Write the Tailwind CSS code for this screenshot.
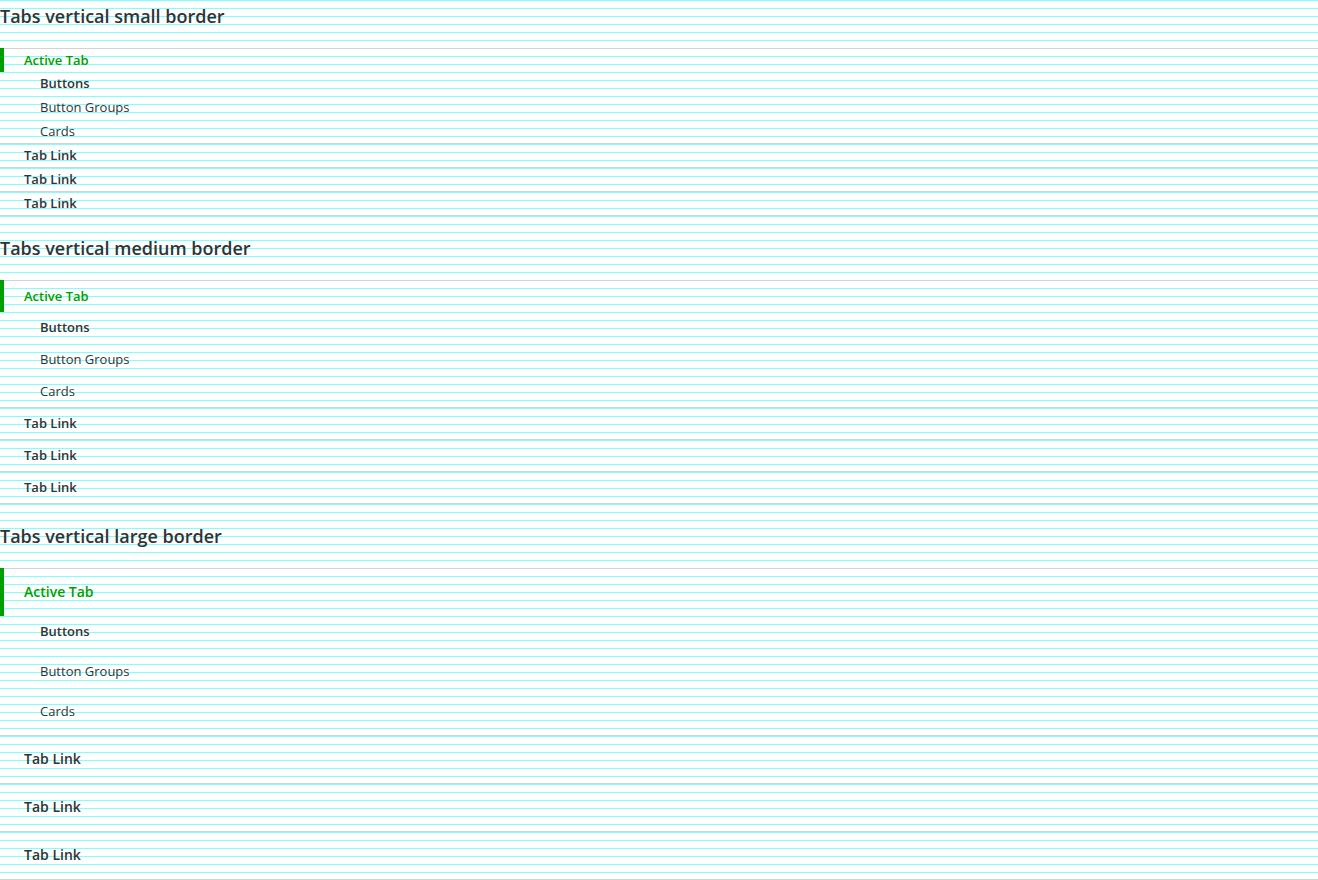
<!DOCTYPE html>
<html lang="en">
<head>
<meta charset="utf-8">
<title>Tabs vertical border</title>
<script src="https://cdn.jsdelivr.net/npm/@tailwindcss/browser@4"></script>
</head>
<body class="min-h-screen bg-white bg-[linear-gradient(#7fffff_1px,transparent_1px)] bg-[length:100%_8px] font-['Open_Sans',sans-serif] text-[13px] text-[#333]">
<main class="flex flex-col gap-4">
  <section>
    <h2 class="mb-4 text-lg leading-8 font-semibold">Tabs vertical small border</h2>
    <ul class="font-semibold">
      <li class="relative border-y border-[#d3d3d3]">
        <a href="#" class="block h-[23px] pl-6 leading-[22px] text-[#009f00]"><span class="absolute -top-px left-0 h-6 w-1 bg-[#009f00]"></span>Active Tab</a>
        <ul class="-mb-px">
          <li><a href="#" class="block h-6 pl-10 leading-[23px]">Buttons</a></li>
          <li><a href="#" class="block h-6 pl-10 leading-[23px] font-normal">Button Groups</a></li>
          <li><a href="#" class="block h-6 pl-10 leading-[23px] font-normal">Cards</a></li>
        </ul>
      </li>
      <li class="h-6 border-b border-[#d3d3d3]"><a href="#" class="block pl-6 leading-[23px]">Tab Link</a></li>
      <li class="h-6 border-b border-[#d3d3d3]"><a href="#" class="block pl-6 leading-[23px]">Tab Link</a></li>
      <li class="h-6 border-b border-[#d3d3d3]"><a href="#" class="block pl-6 leading-[23px]">Tab Link</a></li>
    </ul>
  </section>
  <section>
    <h2 class="mb-4 text-lg leading-8 font-semibold">Tabs vertical medium border</h2>
    <ul class="font-semibold">
      <li class="relative border-y border-[#d3d3d3]">
        <a href="#" class="block h-[31px] pl-6 leading-[30px] text-[#009f00]"><span class="absolute -top-px left-0 h-8 w-1 bg-[#009f00]"></span>Active Tab</a>
        <ul class="-mb-px">
          <li><a href="#" class="block h-8 pl-10 leading-[31px]">Buttons</a></li>
          <li><a href="#" class="block h-8 pl-10 leading-[31px] font-normal">Button Groups</a></li>
          <li><a href="#" class="block h-8 pl-10 leading-[31px] font-normal">Cards</a></li>
        </ul>
      </li>
      <li class="h-8 border-b border-[#d3d3d3]"><a href="#" class="block pl-6 leading-[31px]">Tab Link</a></li>
      <li class="h-8 border-b border-[#d3d3d3]"><a href="#" class="block pl-6 leading-[31px]">Tab Link</a></li>
      <li class="h-8 border-b border-[#d3d3d3]"><a href="#" class="block pl-6 leading-[31px]">Tab Link</a></li>
    </ul>
  </section>
  <section>
    <h2 class="mb-4 text-lg leading-8 font-semibold">Tabs vertical large border</h2>
    <ul class="font-semibold">
      <li class="relative border-y border-[#d3d3d3]">
        <a href="#" class="block h-[47px] pl-6 text-sm leading-[45px] text-[#009f00]"><span class="absolute -top-px left-0 h-12 w-1 bg-[#009f00]"></span>Active Tab</a>
        <ul class="-mb-px">
          <li><a href="#" class="block h-10 pl-10 leading-[31px]">Buttons</a></li>
          <li><a href="#" class="block h-10 pl-10 leading-[31px] font-normal">Button Groups</a></li>
          <li><a href="#" class="block h-10 pl-10 leading-[31px] font-normal">Cards</a></li>
        </ul>
      </li>
      <li class="h-12 border-b border-[#d3d3d3]"><a href="#" class="block pl-6 text-sm leading-[45px]">Tab Link</a></li>
      <li class="h-12 border-b border-[#d3d3d3]"><a href="#" class="block pl-6 text-sm leading-[45px]">Tab Link</a></li>
      <li class="h-12 border-b border-[#d3d3d3]"><a href="#" class="block pl-6 text-sm leading-[45px]">Tab Link</a></li>
    </ul>
  </section>
</main>
</body>
</html>
